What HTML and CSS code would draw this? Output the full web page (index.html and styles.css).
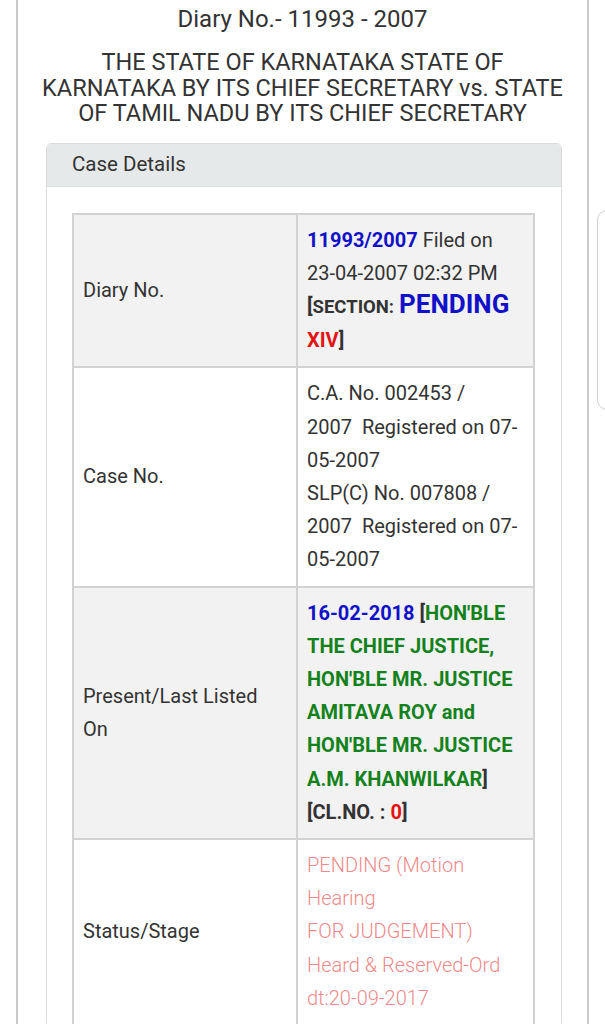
FILE: index.html
```html
<!DOCTYPE html>
<html lang="en">
<head>
  <meta charset="UTF-8" />
  <meta name="viewport" content="width=device-width, initial-scale=1.0"/>
  <title>Case Status — Diary No. 11993 - 2007</title>
  <link rel="stylesheet" href="styles.css">
</head>
<body>
  <div class="page">
    <h3 class="diary-title">Diary No.- 11993 - 2007</h3>
    <h4 class="parties">THE STATE OF KARNATAKA STATE OF KARNATAKA BY ITS CHIEF SECRETARY vs. STATE OF TAMIL NADU BY ITS CHIEF SECRETARY</h4>

    <div class="panel">
      <div class="panel-heading">Case Details</div>
      <div class="panel-body">
        <table class="case-table">
          <tr class="shaded">
            <td class="label">Diary No.</td>
            <td class="value">
              <b class="blue">11993/2007</b> Filed on <span class="nowrap">23-04-2007 02:32 PM</span>
              <b>[<span class="section">SECTION:</span> <span class="section-name">PENDING</span> <span class="red">XIV</span>]</b>
            </td>
          </tr>
          <tr>
            <td class="label">Case No.</td>
            <td class="value">
              C.A. No. 002453 / 2007&nbsp;&nbsp;Registered on 07-05-2007<br>
              SLP(C) No. 007808 / 2007&nbsp;&nbsp;Registered on 07-05-2007
            </td>
          </tr>
          <tr class="shaded">
            <td class="label">Present/Last Listed On</td>
            <td class="value">
              <b class="blue">16-02-2018</b> <b>[<span class="green">HON'BLE THE CHIEF JUSTICE, HON'BLE MR. JUSTICE AMITAVA ROY and HON'BLE MR. JUSTICE A.M. KHANWILKAR</span>]</b>
              <b>[CL.NO. : <span class="red">0</span>]</b>
            </td>
          </tr>
          <tr>
            <td class="label">Status/Stage</td>
            <td class="value status">
              PENDING (Motion Hearing<br>
              FOR JUDGEMENT)<br>
              Heard &amp; Reserved-Ord dt:20-09-2017
            </td>
          </tr>
        </table>
      </div>
    </div>
  </div>

  <div class="scroll-thumb"></div>
</body>
</html>
```

FILE: styles.css
```css
* { box-sizing: border-box; margin: 0; padding: 0; }
body {
  background-color: #fff;
  color: #333;
  font-family: Roboto, "Liberation Sans", sans-serif;
  overflow: hidden;
  height: 1024px;
}
.page {
  border-left: 2px solid #c9c9c9;
  border-right: 2px solid #c9c9c9;
  margin: 0 16px;
  min-height: 1024px;
}
.diary-title {
  font-size: 24px;
  font-weight: 400;
  line-height: 28px;
  padding-top: 5px;
  text-align: center;
}
.parties {
  font-size: 23.5px;
  font-weight: 400;
  line-height: 25.5px;
  margin-top: 17px;
  padding: 0 20px;
  text-align: center;
}
.panel {
  border: 1px solid #dcdcdc;
  border-radius: 5px;
  margin: 16px 25px 0 28px;
}
.panel-heading {
  background-color: #e6e9e9;
  border-bottom: 1px solid #dcdcdc;
  border-radius: 5px 5px 0 0;
  font-size: 20.5px;
  height: 43px;
  line-height: 40px;
  padding: 0 25px;
}
.panel-body {
  padding: 26px 26px 0 25px;
}
.case-table {
  border-collapse: collapse;
  border: 2px solid #d2d2d2;
  width: 100%;
  font-size: 20px;
  line-height: 33.2px;
}
.case-table td {
  border: 2px solid #d2d2d2;
  padding: 9px;
  vertical-align: middle;
}
.case-table .label {
  width: 224px;
  padding-right: 30px;
}
.case-table tr.shaded td {
  background-color: #f2f2f2;
}
.nowrap { white-space: nowrap; }
.blue { color: #1111c8; }
.red { color: #e31313; }
.green { color: #14821c; }
.section {
  font-size: 18.5px;
}
.section-name {
  color: #1111c8;
  font-size: 26px;
  line-height: 0.8;
}
.status {
  color: #ef8a8a;
  font-weight: 300;
}
.scroll-thumb {
  position: absolute;
  top: 210px;
  left: 597px;
  width: 20px;
  height: 200px;
  background-color: #fff;
  border: 1.5px solid #d0d0d0;
  border-radius: 10px;
}
```
